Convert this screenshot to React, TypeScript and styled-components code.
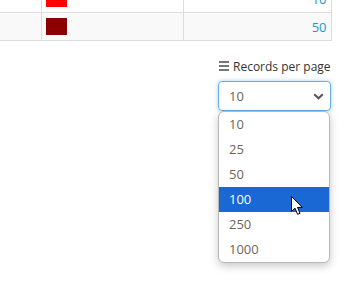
import React from 'react';
import styled, { createGlobalStyle } from 'styled-components';

const GlobalStyle = createGlobalStyle`
  html, body {
    margin: 0;
    padding: 0;
    background: #ffffff;
    overflow: hidden;
  }
  body {
    font-family: 'Open Sans', 'Liberation Sans', sans-serif;
  }
`;

const Page = styled.div`
  width: 345px;
  height: 301px;
  overflow: hidden;
`;

// the table is scrolled so only the bottom of the first row shows
const TableWrap = styled.div`
  margin-top: -16px;
  width: 331px;
`;

const Table = styled.table`
  border-collapse: collapse;
  width: 331px;
  table-layout: fixed;
`;

const Row = styled.tr<{ $striped?: boolean }>`
  background: ${(p) => (p.$striped ? '#f9f9f9' : '#ffffff')};
`;

const Cell = styled.td<{ $w: number; $right?: boolean; $first?: boolean }>`
  width: ${(p) => p.$w}px;
  height: 28px;
  padding: 0 4px;
  box-sizing: border-box;
  border: 1px solid #dddddd;
  border-left: ${(p) => (p.$first ? 'none' : '1px solid #dddddd')};
  text-align: ${(p) => (p.$right ? 'right' : 'left')};
  vertical-align: middle;
  font-size: 13px;
  color: #1b98d0;
`;

const Swatch = styled.div<{ $color: string }>`
  width: 21px;
  height: 17px;
  background: ${(p) => p.$color};
`;

const Controls = styled.div`
  display: flex;
  flex-direction: column;
  align-items: flex-end;
  padding-right: 14px;
  margin-top: 16px;
`;

const Panel = styled.div`
  width: 113px;
  display: flex;
  flex-direction: column;
`;

const Label = styled.div`
  display: flex;
  align-items: center;
  gap: 4px;
  height: 18px;
  padding-left: 1px;
  font-size: 12px;
  color: #333333;
  white-space: nowrap;
`;

const MenuIcon = styled.span`
  display: flex;
  flex-direction: column;
  gap: 2px;
  width: 10px;

  & > i {
    display: block;
    height: 2px;
    background: #777777;
  }
`;

const SelectBox = styled.div`
  position: relative;
  margin-top: 6px;
  height: 30px;
  box-sizing: border-box;
  border: 1px solid #66afe9;
  border-radius: 4px;
  box-shadow: 0 0 4px rgba(102, 175, 233, 0.6);
  display: flex;
  align-items: center;
  justify-content: space-between;
  padding: 0 6px 0 10px;
  font-size: 13px;
  color: #6f645a;
`;

const Dropdown = styled.ul`
  position: absolute;
  left: -1px;
  top: 29px;
  width: 112px;
  margin: 0;
  padding: 0;
  list-style: none;
  background: #ffffff;
  border: 1px solid #b8b8b8;
  border-radius: 6px;
  box-sizing: border-box;
  overflow: hidden;
  box-shadow: 0 3px 8px rgba(0, 0, 0, 0.22);
`;

const Option = styled.li<{ $active?: boolean }>`
  height: 25px;
  line-height: 25px;
  padding-left: 10px;
  font-size: 13px;
  color: ${(p) => (p.$active ? '#ffffff' : '#6f645a')};
  background: ${(p) => (p.$active ? '#1a68d3' : 'transparent')};
`;

const Cursor = styled.svg`
  position: absolute;
  left: 72px;
  top: 114px;
`;

const options = ['10', '25', '50', '100', '250', '1000'];

const App: React.FC = () => {
  return (
    <Page>
      <GlobalStyle />
      <TableWrap>
        <Table>
          <tbody>
            <Row>
              <Cell $w={41} $first />
              <Cell $w={142}>
                <Swatch $color="#ff0000" />
              </Cell>
              <Cell $w={148} $right>
                10
              </Cell>
            </Row>
            <Row $striped>
              <Cell $w={41} $first />
              <Cell $w={142}>
                <Swatch $color="#8b0000" />
              </Cell>
              <Cell $w={148} $right>
                50
              </Cell>
            </Row>
          </tbody>
        </Table>
      </TableWrap>
      <Controls>
        <Panel>
          <Label>
            <MenuIcon>
              <i />
              <i />
              <i />
            </MenuIcon>
            Records per page
          </Label>
          <SelectBox>
            <span>10</span>
            <svg width="11" height="7" viewBox="0 0 11 7">
              <path d="M1.2 1.2 L5.5 5.3 L9.8 1.2" fill="none" stroke="#555" strokeWidth="2" />
            </svg>
            <Dropdown>
              {options.map((o) => (
                <Option key={o} $active={o === '100'}>
                  {o}
                </Option>
              ))}
            </Dropdown>
            <Cursor width="13" height="20" viewBox="0 0 13 20">
              <path
                d="M0.5 0.5 L0.5 15.5 L4 12.2 L6.6 18.3 L9 17.3 L6.5 11.4 L11.3 11.4 Z"
                fill="#ffffff"
                stroke="#000000"
                strokeWidth="1"
                strokeLinejoin="round"
              />
            </Cursor>
          </SelectBox>
        </Panel>
      </Controls>
    </Page>
  );
};

export default App;
